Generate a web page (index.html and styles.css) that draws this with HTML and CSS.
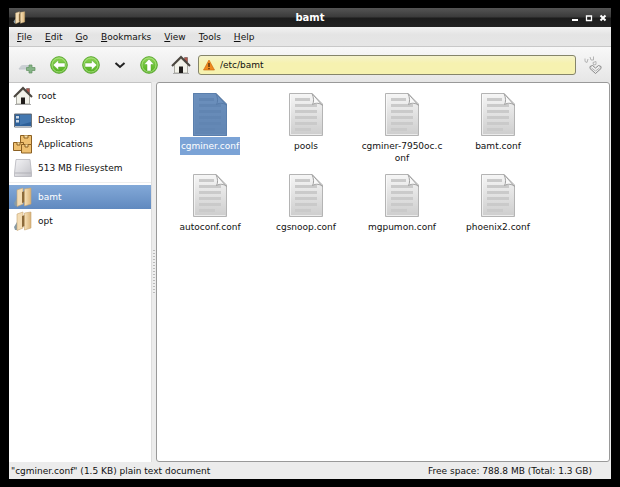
FILE: index.html
```html
<!DOCTYPE html>
<html lang="en">
<head>
    <meta charset="UTF-8">
    <title>bamt</title>
    <link rel="stylesheet" href="styles.css">
</head>
<body>
    <!-- Shared icons -->
    <svg class="defs" width="0" height="0" aria-hidden="true">
        <defs>
            <linearGradient id="paper" x1="0" y1="0" x2="0" y2="1">
                <stop offset="0" stop-color="#f6f6f6"/>
                <stop offset="1" stop-color="#cdcdcd"/>
            </linearGradient>
            <linearGradient id="green" x1="0" y1="0" x2="0" y2="1">
                <stop offset="0" stop-color="#8ed655"/>
                <stop offset="1" stop-color="#4fae1c"/>
            </linearGradient>
            <linearGradient id="tan" x1="0" y1="0" x2="1" y2="0">
                <stop offset="0" stop-color="#f7e2ba"/>
                <stop offset="1" stop-color="#d9b277"/>
            </linearGradient>
            <linearGradient id="disk" x1="0" y1="0" x2="1" y2="1">
                <stop offset="0" stop-color="#f4f4f6"/>
                <stop offset="1" stop-color="#c2c2c8"/>
            </linearGradient>
        </defs>
        <symbol id="file" viewBox="0 0 36 44">
            <path d="M1.500 .5H24L34.500 11V42.500H1.500Z" fill="url(#paper)" stroke="#b4b4b4"/>
            <path d="M2.500 1.500V41.500H33.500" fill="none" stroke="#fff" opacity=".6"/>
            <path d="M7 6.500H22M7 12.500H29M7 18.500H29M7 24.500H29M7 30.500H29M7 36.500H23" stroke="#cacaca" stroke-width="3"/>
            <path d="M24 .5C26 5 26 9 24.500 11.500C28 9.500 32 10 34.500 12.500Z" fill="#f9f9f9" stroke="#a0a0a0"/>
        </symbol>
        <symbol id="house" viewBox="0 0 20 20">
            <path d="M13.500 2.500H16.500V7H13.500Z" fill="#b3554b" stroke="#6a5550" stroke-width=".6"/>
            <path d="M3.500 9.500L10 3.500L16.500 9.500V18H3.500Z" fill="#f2f2ea" stroke="#999990" stroke-width=".8"/>
            <path d="M1 11L10 2L19 11" fill="none" stroke="#4b463f" stroke-width="2"/>
            <path d="M8 11.500H12V18H8Z" fill="#201d1b"/>
            <path d="M2 18.500H18" stroke="#aaa"/>
        </symbol>
        <symbol id="folder" viewBox="0 0 20 20">
            <path d="M1 16L4 11V19H2Z" fill="#879ba6"/>
            <path d="M4 3L10 1V17L4 19.500Z" fill="#f3dcb4" stroke="#c7a672" stroke-width=".6"/>
            <path d="M9 5L12 4V15L9 16Z" fill="#8b6a3b"/>
            <path d="M11.500 2L18 1V17L11.500 19Z" fill="url(#tan)" stroke="#c7a672" stroke-width=".6"/>
        </symbol>
        <symbol id="disc" viewBox="0 0 20 20">
            <circle cx="10" cy="10" r="8.300" fill="url(#green)" stroke="#5ba832" stroke-width="1"/>
            <circle cx="10" cy="10" r="7" fill="none" stroke="#b4e58c" stroke-width=".8"/>
        </symbol>
        <symbol id="arrow" viewBox="0 0 20 20">
            <path d="M4 10L9.500 5V8H16V12H9.500V15Z" fill="#fff" stroke="#5aa832" stroke-width=".5"/>
        </symbol>
    </svg>

    <div class="window">
        <header class="titlebar">
            <svg class="app-icon" viewBox="0 0 20 20"><use href="#folder"/></svg>
            <h1>bamt</h1>
            <div class="controls">
                <button type="button" aria-label="Minimize"><svg viewBox="0 0 8 8"><path d="M1 6H7" stroke="#fff" stroke-width="2"/></svg></button>
                <button type="button" aria-label="Maximize"><svg viewBox="0 0 8 8"><path d="M1.500 2H6.500V6.500H1.500ZM1 2H7" fill="none" stroke="#fff" stroke-width="1.300"/></svg></button>
                <button type="button" aria-label="Close"><svg viewBox="0 0 8 8"><path d="M1.500 1.500L6.500 6.500M6.500 1.500L1.500 6.500" stroke="#fff" stroke-width="2"/></svg></button>
            </div>
        </header>

        <nav class="menubar">
            <button type="button"><u>F</u>ile</button>
            <button type="button"><u>E</u>dit</button>
            <button type="button"><u>G</u>o</button>
            <button type="button"><u>B</u>ookmarks</button>
            <button type="button"><u>V</u>iew</button>
            <button type="button"><u>T</u>ools</button>
            <button type="button"><u>H</u>elp</button>
        </nav>

        <div class="toolbar">
            <button type="button" class="tool" aria-label="New tab">
                <svg viewBox="0 0 20 20">
                    <path d="M1 14C3 13.500 3 10 6 10H13C15 10 14 14 17 14Z" fill="#cbd0d4"/>
                    <path d="M2 14H16" stroke="#c2c7cd"/>
                    <path d="M12 10H15V12.500H18V15.500H15V18H12V15.500H9.500V12.500H12Z" fill="#86b487" stroke="#60915f" stroke-width=".7"/>
                </svg>
            </button>
            <button type="button" class="tool" aria-label="Back">
                <svg viewBox="0 0 20 20"><use href="#disc"/><use href="#arrow"/></svg>
            </button>
            <button type="button" class="tool" aria-label="Forward">
                <svg viewBox="0 0 20 20"><use href="#disc"/><g transform="rotate(180 10 10)"><use href="#arrow"/></g></svg>
            </button>
            <button type="button" class="tool history" aria-label="History">
                <svg viewBox="0 0 20 20"><path d="M5.500 8L10 12L14.500 8" fill="none" stroke="#222" stroke-width="2"/></svg>
            </button>
            <button type="button" class="tool" aria-label="Up">
                <svg viewBox="0 0 20 20"><use href="#disc"/><g transform="rotate(90 10 10)"><use href="#arrow"/></g></svg>
            </button>
            <button type="button" class="tool" aria-label="Home">
                <svg viewBox="0 0 20 20"><use href="#house"/></svg>
            </button>
            <label class="location">
                <svg viewBox="0 0 12 12">
                    <path d="M6 1L11.500 11H.5Z" fill="#ef8a1d" stroke="#c9650f" stroke-width=".6"/>
                    <path d="M6 4V8M6 9V10.200" stroke="#4a2a08" stroke-width="1.300"/>
                </svg>
                <input type="text" value="/etc/bamt" aria-label="Location">
            </label>
            <button type="button" class="tool go" aria-label="Jump to">
                <svg viewBox="0 0 20 20" fill="none" stroke="#b4b4b4">
                    <path d="M2 3.500V6.500L4 7.500L5 4M7 2L8 5L10.500 5V1.500M10 7.500L13 6.500V9.500L10.500 10Z"/>
                    <path d="M7 11.500L9.500 10.500L12.500 13L15.500 10.500L18 11.500V13.500L12.500 18.500L7 13.500Z" fill="#eee" stroke="#888"/>
                    <path d="M8.500 13L12.500 16L16.500 13"/>
                </svg>
            </button>
        </div>

        <main class="panes">
            <aside class="places">
                <a href="#root"><svg viewBox="0 0 20 20"><use href="#house"/></svg>root</a>
                <a href="#desktop">
                    <svg viewBox="0 0 20 20">
                        <path d="M1.500 4H18.500V17H1.500Z" fill="#2f6199" stroke="#6b737d"/>
                        <path d="M7 5H18V12L7 15Z" fill="#4478b0"/>
                        <path d="M3 6H6V8.500H3ZM3 10H6V12.500H3Z" fill="#cdd9e6"/>
                        <path d="M2 16.500H18" stroke="#b5bcc4"/>
                    </svg>Desktop
                </a>
                <a href="#applications">
                    <svg viewBox="0 0 20 20" fill="#eec071" stroke="#8b6023">
                        <path d="M7.500 1.500H18.500V10.500H7.500Z"/>
                        <path d="M11 1.500V4H15V1.500" fill="#f8e0a9"/>
                        <path d="M.5 8.500H10.500V16.500H.5Z"/>
                        <path d="M4 8.500V11H7V8.500" fill="#f8e0a9"/>
                        <path d="M8.500 10.500H18.500V19H8.500Z"/>
                        <path d="M12 10.500V13H15V10.500" fill="#f8e0a9"/>
                    </svg>Applications
                </a>
                <a href="#filesystem">
                    <svg viewBox="0 0 20 20">
                        <path d="M3 1.500H17L18.500 15V18.500H1.500V15Z" fill="url(#disk)" stroke="#b4b4ba" stroke-width=".8"/>
                        <path d="M2 15H18" stroke="#aaaab0" stroke-width=".8"/>
                    </svg>513 MB Filesystem
                </a>
                <hr>
                <a href="#bamt" class="active"><svg viewBox="0 0 20 20"><use href="#folder"/></svg>bamt</a>
                <a href="#opt"><svg viewBox="0 0 20 20"><use href="#folder"/></svg>opt</a>
            </aside>
            <div class="splitter"></div>
            <section class="files">
                <a href="#cgminer.conf" class="selected"><svg viewBox="0 0 36 44"><use href="#file"/><path class="tint" d="M1 0H24L35 11V43H1Z"/></svg><span>cgminer.conf</span></a>
                <a href="#pools"><svg viewBox="0 0 36 44"><use href="#file"/></svg><span>pools</span></a>
                <a href="#cgminer-7950oc.conf"><svg viewBox="0 0 36 44"><use href="#file"/></svg><span>cgminer-7950oc.conf</span></a>
                <a href="#bamt.conf"><svg viewBox="0 0 36 44"><use href="#file"/></svg><span>bamt.conf</span></a>
                <a href="#autoconf.conf"><svg viewBox="0 0 36 44"><use href="#file"/></svg><span>autoconf.conf</span></a>
                <a href="#cgsnoop.conf"><svg viewBox="0 0 36 44"><use href="#file"/></svg><span>cgsnoop.conf</span></a>
                <a href="#mgpumon.conf"><svg viewBox="0 0 36 44"><use href="#file"/></svg><span>mgpumon.conf</span></a>
                <a href="#phoenix2.conf"><svg viewBox="0 0 36 44"><use href="#file"/></svg><span>phoenix2.conf</span></a>
            </section>
        </main>

        <footer class="statusbar">
            <span>"cgminer.conf" (1.5 KB) plain text document</span>
            <span>Free space: 788.8 MB (Total: 1.3 GB)</span>
        </footer>
    </div>
</body>
</html>
```
FILE: styles.css
```css
* {
    box-sizing: border-box;
}

body {
    margin: 0;
    min-height: 100vh;
    padding: 8px 9px;
    display: flex;
    background-color: #000;
    color: #111;
    font-family: "DejaVu Sans", sans-serif;
    font-size: 9px;
    line-height: 12px;
}

button,
input {
    margin: 0;
    padding: 0;
    border: none;
    background: none;
    color: inherit;
    font: inherit;
}

a {
    color: inherit;
    text-decoration: none;
}

svg {
    display: block;
    flex: none;
}

.defs {
    position: absolute;
}

.window {
    flex: 1;
    min-width: 0;
    display: flex;
    flex-direction: column;
    background-color: #ececec;
}

/* Title bar */
.titlebar {
    height: 19px;
    padding: 0 4px;
    display: grid;
    grid-template-columns: 1fr auto 1fr;
    align-items: center;
    background: linear-gradient(#555, #3a3a3a 48%, #1c1c1c 52%, #222);
    color: #fff;
}

.titlebar h1 {
    margin: 0;
    font-size: 10px;
    line-height: 12px;
}

.app-icon {
    width: 13px;
    height: 13px;
}

.controls {
    display: flex;
    justify-content: flex-end;
    gap: 6px;
}

.controls svg {
    width: 8px;
    height: 8px;
}

/* Menu */
.menubar {
    height: 20px;
    padding: 0 8px;
    display: flex;
    align-items: center;
    gap: 13px;
    border-bottom: 1px solid #c8c8c8;
    background: linear-gradient(#f2f2f2, #e4e4e4 40%, #e6e6e6);
}

.menubar u {
    text-underline-offset: 1px;
}

/* Toolbar */
.toolbar {
    height: 35px;
    padding: 0 8px;
    display: flex;
    align-items: center;
    gap: 12px;
    background: linear-gradient(#f8f8f8, #e6e6e6);
}

.tool svg {
    width: 20px;
    height: 20px;
}

.history {
    margin: 0 -3px;
}

.location {
    flex: 1;
    height: 20px;
    margin-left: -5px;
    padding: 0 4px;
    display: flex;
    align-items: center;
    gap: 5px;
    border: 1px solid #85856a;
    border-radius: 3px;
    background: linear-gradient(#f5f3cb, #f6f2b0 40%);
}

.location svg {
    width: 12px;
    height: 12px;
}

.location input {
    flex: 1;
    min-width: 0;
    outline: none;
}

.go {
    margin-left: -5px;
}

/* Side pane and file list */
.panes {
    flex: 1;
    padding-right: 1px;
    display: flex;
}

.places {
    width: 142px;
    padding-top: 1px;
    border-top: 1px solid #c4c4c4;
    background-color: #fff;
}

.places a {
    height: 24px;
    padding-left: 4px;
    display: flex;
    align-items: center;
    gap: 5px;
}

.places svg {
    width: 20px;
    height: 20px;
}

.places hr {
    height: 1px;
    margin: 2px 0;
    border: none;
    background-color: #eee;
}

.places .active {
    background: linear-gradient(#83a9d8, #6089bf);
    color: #fff;
}

.splitter {
    width: 5px;
    border-left: 1px solid #ddd;
    background: repeating-linear-gradient(#bbb 0 1px, #f0f0f0 1px 3px) center / 2px 44px no-repeat;
}

.files {
    flex: 1;
    padding: 10px 5px;
    display: grid;
    grid-template-columns: repeat(auto-fill, 96px);
    align-content: start;
    row-gap: 7px;
    border: 1px solid #999;
    border-radius: 3px;
    background-color: #fff;
}

.files a {
    display: flex;
    flex-direction: column;
    align-items: center;
    text-align: center;
}

.files svg {
    width: 36px;
    height: 44px;
}

.files span {
    max-width: 86px;
    padding: 3px 1px;
    word-break: break-all;
}

.files .selected span {
    background-color: #7ba3d6;
    color: #fff;
}

.tint {
    fill: #3d6ea9;
    opacity: 0.75;
}

/* Status */
.statusbar {
    height: 17px;
    padding: 0 19px 0 2px;
    display: flex;
    align-items: center;
    justify-content: space-between;
}
```
